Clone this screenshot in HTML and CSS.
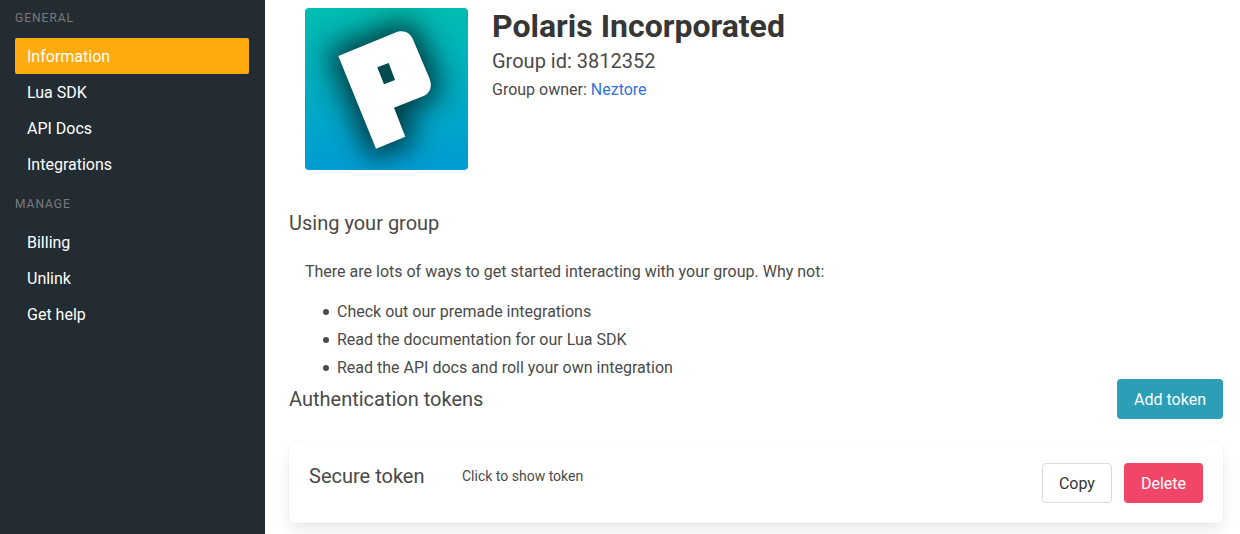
FILE: index.html
```html
<!DOCTYPE html>
<html lang="en">
<head>
<meta charset="utf-8">
<meta name="viewport" content="width=device-width, initial-scale=1">
<title>Polaris Incorporated</title>
<link rel="stylesheet" href="styles.css">
</head>
<body>
<div class="layout">
  <nav class="sidebar" aria-label="Group">
    <p class="menu-label">General</p>
    <ul class="menu-list">
      <li><a class="menu-link is-active" href="#information" aria-current="page">Information</a></li>
      <li><a class="menu-link" href="#lua">Lua SDK</a></li>
      <li><a class="menu-link" href="#docs">API Docs</a></li>
      <li><a class="menu-link" href="#integrations">Integrations</a></li>
    </ul>
    <p class="menu-label">Manage</p>
    <ul class="menu-list">
      <li><a class="menu-link" href="#billing">Billing</a></li>
      <li><a class="menu-link" href="#unlink">Unlink</a></li>
      <li><a class="menu-link" href="#help">Get help</a></li>
    </ul>
  </nav>
  <main class="content">
    <header class="group">
      <svg class="group-logo" viewBox="0 0 163 162" role="img" aria-label="Group logo">
        <defs>
          <linearGradient id="sky" x1="0" y1="0" x2="0" y2="1">
            <stop offset="0" stop-color="#00bdb0"/>
            <stop offset="1" stop-color="#009cd3"/>
          </linearGradient>
          <filter id="glow" x="-50%" y="-50%" width="200%" height="200%" color-interpolation-filters="sRGB">
            <feGaussianBlur stdDeviation="14"/>
          </filter>
        </defs>
        <rect width="163" height="162" fill="url(#sky)"/>
        <path d="M33.3 48 90 24.7Q102.5 19.5 108 31.5L124.5 70.5Q129 83 118 88.3L89 99.7 100.3 128.7 71 140.7Z" fill="#00282c" stroke="#00282c" stroke-width="18" opacity=".85" filter="url(#glow)"/>
        <path d="M72.3 59.3 83.7 55 90 72 79 76.3Z" fill="#004a50"/>
        <path fill-rule="evenodd" d="M33.3 48 90 24.7C98 21.500 104.500 23.500 108 31.500L124.500 70.500C127.500 78.500 125.500 85 118 88.300L89 99.700 100.300 128.700 71 140.700ZM72.300 59.300 79 76.300 90 72 83.700 55Z" fill="#fff"/>
      </svg>
      <div class="group-info">
        <h1 class="title">Polaris Incorporated</h1>
        <p class="subtitle">Group id: 3812352</p>
        <p class="owner">Group owner: <a class="link" href="#neztore">Neztore</a></p>
      </div>
    </header>
    <section class="usage">
      <h2 class="subtitle">Using your group</h2>
      <div class="usage-text">
        <p>There are lots of ways to get started interacting with your group. Why not:</p>
        <ul class="bullets">
          <li>Check out our premade integrations</li>
          <li>Read the documentation for our Lua SDK</li>
          <li>Read the API docs and roll your own integration</li>
        </ul>
      </div>
    </section>
    <section class="tokens">
      <div class="tokens-head">
        <h2 class="subtitle">Authentication tokens</h2>
        <button class="button is-info" type="button">Add token</button>
      </div>
      <article class="card">
        <h3 class="subtitle token-name">Secure token</h3>
        <p class="token-value">Click to show token</p>
        <div class="actions">
          <button class="button" type="button">Copy</button>
          <button class="button is-danger" type="button">Delete</button>
        </div>
      </article>
    </section>
  </main>
</div>
</body>
</html>
```
FILE: styles.css
```css
* {
  box-sizing: border-box;
  margin: 0;
  padding: 0;
}

body {
  background: #fff;
  color: #4a4a4a;
  font-family: Roboto, "Liberation Sans", sans-serif;
  font-size: 16px;
  line-height: 25px;
}

a {
  text-decoration: none;
}

.layout {
  display: flex;
  min-height: 100vh;
}

.sidebar {
  flex: 0 0 265px;
  padding: 8px 16px 12px 15px;
  background: #242c33;
}

.menu-label {
  margin-bottom: 10px;
  color: #7a7a7a;
  font-size: 12px;
  letter-spacing: 1px;
  line-height: 20px;
  text-transform: uppercase;
}

.menu-list {
  margin-bottom: 12px;
  list-style: none;
}

.menu-link {
  display: block;
  padding: 6px 12px 5px;
  border-radius: 2px;
  color: #fff;
}

.menu-link.is-active {
  background: #ffaa0d;
}

.content {
  flex: 1;
  min-width: 0;
  padding: 8px 17px 11px 24px;
}

.group {
  display: flex;
  gap: 24px;
  padding-left: 16px;
}

.group-logo {
  flex: none;
  width: 163px;
  height: 162px;
  border-radius: 4px;
}

.title {
  color: #363636;
  font-size: 32px;
  font-weight: 700;
  line-height: 36px;
}

.subtitle {
  font-size: 20px;
  font-weight: 400;
  line-height: 26px;
}

.group-info .subtitle {
  margin: 4px 0 3px;
}

.link {
  color: #3273dc;
}

.usage {
  margin-top: 40px;
}

.usage-text {
  padding: 23px 16px 0;
}

.bullets {
  display: grid;
  gap: 5px;
  margin-top: 16px;
  padding-left: 18px;
  line-height: 23px;
  list-style: none;
}

.bullets li {
  display: flex;
  gap: 8px;
}

.bullets li::before {
  content: "";
  flex: none;
  width: 6px;
  height: 6px;
  margin-top: 9px;
  border-radius: 50%;
  background: currentColor;
}

.tokens-head {
  display: flex;
  align-items: center;
  justify-content: space-between;
}

.button {
  height: 40px;
  padding: 1px 16px 0;
  border: 1px solid #dbdbdb;
  border-radius: 4px;
  background: #fff;
  color: #363636;
  font: inherit;
  cursor: pointer;
}

.button.is-info {
  border-color: transparent;
  background: #2c9fb6 border-box;
  color: #fff;
}

.button.is-danger {
  border-color: transparent;
  background: #f14668 border-box;
  color: #fff;
}

.card {
  display: flex;
  align-items: flex-start;
  margin-top: 24px;
  padding: 20px;
  border-radius: 6px;
  box-shadow: 0 8px 16px -2px rgba(10, 10, 10, 0.1), 0 0 0 1px rgba(10, 10, 10, 0.02);
}

.token-name {
  flex: 0 0 153px;
}

.token-value {
  font-size: 14px;
  line-height: 26px;
}

.actions {
  display: flex;
  gap: 12px;
  margin-left: auto;
}
```
